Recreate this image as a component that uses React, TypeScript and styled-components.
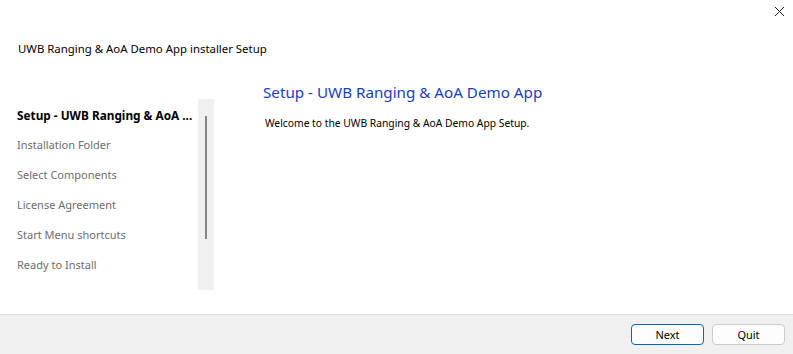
import React from "react";
import styled, { createGlobalStyle } from "styled-components";

const Global = createGlobalStyle`
  html, body { margin: 0; padding: 0; background: #ffffff; }
  body { font-family: "Segoe UI", "Noto Sans", "Open Sans", sans-serif; }
  * { box-sizing: border-box; }
`;

const Window = styled.div`
  width: 793px;
  height: 354px;
  display: flex;
  flex-direction: column;
  background: #ffffff;
  position: relative;
`;

const CloseButton = styled.div`
  position: absolute;
  top: 5px;
  right: 8px;
  width: 12px;
  height: 12px;
  display: flex;
  align-items: center;
  justify-content: center;
`;

const TitleBar = styled.div`
  height: 99px;
  padding: 41px 0 0 18px;
  font-size: 11.4px;
  line-height: 16px;
  color: #000000;
`;

const Body = styled.div`
  flex: 1;
  display: flex;
  min-height: 0;
`;

const Sidebar = styled.div`
  width: 214px;
  display: flex;
  align-items: flex-start;
`;

const StepList = styled.div`
  width: 198px;
  display: flex;
  flex-direction: column;
  padding: 8px 0 0 17px;
`;

const Step = styled.div<{ $active?: boolean }>`
  height: 30px;
  font-size: ${(p) => (p.$active ? "11.8px" : "11px")};
  line-height: 16px;
  font-weight: ${(p) => (p.$active ? 700 : 400)};
  color: ${(p) => (p.$active ? "#000000" : "#6d6d6d")};
  white-space: nowrap;
`;

const Track = styled.div`
  width: 16px;
  height: 191px;
  background: #f0f0f0;
  display: flex;
  justify-content: center;
  padding-top: 17px;
`;

const Thumb = styled.div`
  width: 2px;
  height: 123px;
  background: #858585;
`;

const Content = styled.div`
  flex: 1;
  padding: 0 0 0 49px;
  display: flex;
  flex-direction: column;
`;

const Heading = styled.div`
  font-size: 15.2px;
  color: #1a3cc4;
  line-height: 20px;
  margin-top: -17px;
`;

const Welcome = styled.div`
  font-size: 10.3px;
  color: #000000;
  line-height: 14px;
  margin-top: 14px;
  padding-left: 2px;
`;

const Footer = styled.div`
  height: 40px;
  background: #f0f0f0;
  border-top: 1px solid #dfdfdf;
  display: flex;
  justify-content: flex-end;
  align-items: flex-start;
  gap: 8px;
  padding: 9px 8px 0 0;
`;

const Button = styled.button<{ $primary?: boolean }>`
  width: 73px;
  height: 21px;
  border-radius: 4px;
  border: 1px solid ${(p) => (p.$primary ? "#0067c0" : "#cccccc")};
  background: #fdfdfd;
  font-family: inherit;
  font-size: 11px;
  color: #000000;
  padding: 0;
`;

export default function App() {
  return (
    <>
      <Global />
      <Window>
        <CloseButton>
          <svg width="11" height="11" viewBox="0 0 11 11">
            <path d="M1 1 L10 10 M10 1 L1 10" stroke="#222" strokeWidth="1" />
          </svg>
        </CloseButton>
        <TitleBar>UWB Ranging &amp; AoA Demo App installer Setup</TitleBar>
        <Body>
          <Sidebar>
            <StepList>
              <Step $active>Setup - UWB Ranging &amp; AoA ...</Step>
              <Step>Installation Folder</Step>
              <Step>Select Components</Step>
              <Step>License Agreement</Step>
              <Step>Start Menu shortcuts</Step>
              <Step>Ready to Install</Step>
            </StepList>
            <Track>
              <Thumb />
            </Track>
          </Sidebar>
          <Content>
            <Heading>Setup - UWB Ranging &amp; AoA Demo App</Heading>
            <Welcome>Welcome to the UWB Ranging &amp; AoA Demo App Setup.</Welcome>
          </Content>
        </Body>
        <Footer>
          <Button $primary>Next</Button>
          <Button>Quit</Button>
        </Footer>
      </Window>
    </>
  );
}
